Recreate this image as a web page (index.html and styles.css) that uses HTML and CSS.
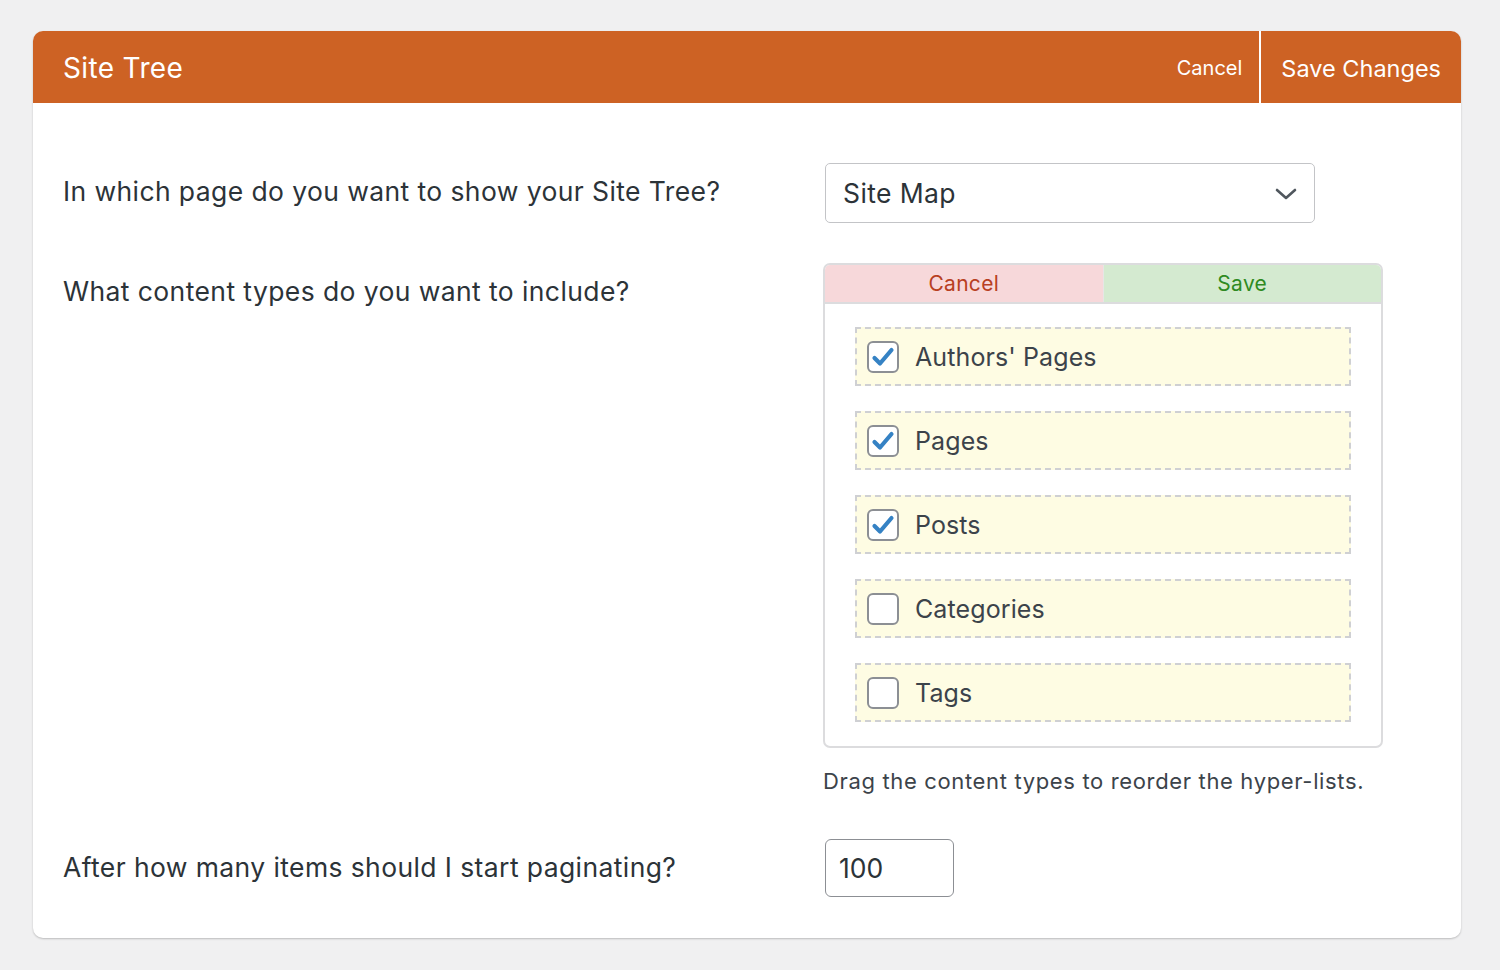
FILE: index.html
```html
<!DOCTYPE html>
<html>
<head>
<meta charset="utf-8">
<link rel="stylesheet" href="styles.css">
</head>
<body>
<div class="card">
  <div class="card-head">
    <h1 class="title">Site Tree</h1>
    <div class="head-actions">
      <button class="head-btn cancel">Cancel</button>
      <span class="head-sep"></span>
      <button class="head-btn save">Save Changes</button>
    </div>
  </div>
  <div class="card-body">
    <div class="row">
      <div class="label">In which page do you want to show your Site Tree?</div>
      <div class="control">
        <div class="select">
          <span>Site Map</span>
          <svg class="chev" width="22" height="14" viewBox="0 0 22 14"><path d="M2 3 L11 11 L20 3" fill="none" stroke="#50575e" stroke-width="2.6" stroke-linecap="round" stroke-linejoin="round"/></svg>
        </div>
      </div>
    </div>
    <div class="row">
      <div class="label">What content types do you want to include?</div>
      <div class="control">
        <div class="types">
          <div class="types-head">
            <button class="tbtn tcancel">Cancel</button>
            <button class="tbtn tsave">Save</button>
          </div>
          <div class="types-list">
            <div class="item"><span class="cb checked"><svg width="26" height="24" viewBox="0 0 26 24"><path d="M4.5 13 L10 18.5 L21.5 5" fill="none" stroke="#3582c4" stroke-width="4.2" stroke-linecap="round" stroke-linejoin="round"/></svg></span><span class="item-label">Authors' Pages</span></div>
            <div class="item"><span class="cb checked"><svg width="26" height="24" viewBox="0 0 26 24"><path d="M4.5 13 L10 18.5 L21.5 5" fill="none" stroke="#3582c4" stroke-width="4.2" stroke-linecap="round" stroke-linejoin="round"/></svg></span><span class="item-label">Pages</span></div>
            <div class="item"><span class="cb checked"><svg width="26" height="24" viewBox="0 0 26 24"><path d="M4.5 13 L10 18.5 L21.5 5" fill="none" stroke="#3582c4" stroke-width="4.2" stroke-linecap="round" stroke-linejoin="round"/></svg></span><span class="item-label">Posts</span></div>
            <div class="item"><span class="cb"></span><span class="item-label">Categories</span></div>
            <div class="item"><span class="cb"></span><span class="item-label">Tags</span></div>
          </div>
        </div>
        <p class="hint">Drag the content types to reorder the hyper-lists.</p>
      </div>
    </div>
    <div class="row">
      <div class="label">After how many items should I start paginating?</div>
      <div class="control">
        <div class="num">100</div>
      </div>
    </div>
  </div>
</div>
</body>
</html>
```
FILE: styles.css
```css
html, body {
  margin: 0;
  padding: 0;
  background: #f0f0f1;
  font-family: Inter, "Noto Sans", "Liberation Sans", sans-serif;
}
body {
  padding: 31px 39px 30px 33px;
}
.card {
  background: #fff;
  border-radius: 10px;
  box-shadow: 0 1px 2px rgba(0,0,0,0.22);
  overflow: hidden;
}
.card-head {
  background: #cd6224;
  height: 72px;
  display: flex;
  align-items: center;
  justify-content: space-between;
  padding-left: 30px;
}
.title {
  margin: 0 0 0 0;
  padding-top: 2px;
  color: #fff;
  font-weight: 400;
  font-size: 28px;
  letter-spacing: 0.35px;
}
.head-actions {
  display: flex;
  align-items: stretch;
  height: 100%;
}
.head-btn {
  background: transparent;
  border: 0;
  color: #fff;
  font-family: inherit;
  padding: 0;
  cursor: pointer;
}
.head-btn.cancel {
  font-size: 20px;
  padding: 2px 17px 0 0;
}
.head-sep {
  width: 2px;
  background: #fff;
}
.head-btn.save {
  font-size: 23.5px;
  padding: 2px 20px 0 20px;
}
.card-body {
  padding: 60px 30px 41px 30px;
  display: flex;
  flex-direction: column;
  gap: 40px;
}
.row {
  display: grid;
  grid-template-columns: 760px 1fr;
}
.label {
  color: #2c3338;
  font-size: 26.5px;
  letter-spacing: 0.4px;
  line-height: 36px;
  padding-top: 10px;
}
.select {
  margin-left: 2px;
  height: 58px;
  border: 1px solid #c3c4c7;
  border-radius: 5px;
  display: flex;
  align-items: center;
  justify-content: space-between;
  padding: 0 17px 0 17px;
  box-sizing: content-box;
  width: 454px;
  color: #2c3338;
  font-size: 26.5px;
  letter-spacing: 0.4px;
}
.chev { margin-top: 2px; }
.types {
  width: 556px;
  border: 2px solid #dcdcde;
  border-radius: 7px;
  overflow: hidden;
}
.types-head {
  display: flex;
  height: 37px;
  border-bottom: 2px solid #dcdcde;
}
.tbtn {
  flex: 1;
  border: 0;
  font-family: inherit;
  font-size: 21px;
  letter-spacing: 0.3px;
  padding: 0;
}
.tcancel {
  background: #f7d8da;
  color: #b83f22;
  border-right: 1px solid #e6e6e6;
}
.tsave {
  background: #d4ead0;
  color: #2f8a22;
}
.types-list {
  padding: 23px 30px 24px 30px;
  display: flex;
  flex-direction: column;
  gap: 25px;
}
.item {
  height: 55px;
  border: 2px dashed #cfd0d3;
  background: #fefce3;
  display: flex;
  align-items: center;
  padding-left: 10px;
}
.cb {
  width: 28px;
  height: 28px;
  border: 2px solid #8c8f94;
  border-radius: 6px;
  background: #fff;
  display: flex;
  align-items: center;
  justify-content: center;
  margin-right: 16px;
}
.item-label {
  color: #3c434a;
  font-size: 25px;
  letter-spacing: 0.1px;
}
.hint {
  margin: 18px 0 0 0;
  color: #3c434a;
  font-size: 22px;
  letter-spacing: 0.65px;
  line-height: 30px;
  padding-bottom: 3px;
}
.num {
  margin-left: 2px;
  width: 114px;
  height: 56px;
  border: 1.5px solid #8c8f94;
  border-radius: 6px;
  display: flex;
  align-items: center;
  padding-left: 13px;
  color: #2c3338;
  font-size: 26.5px;
}
```
